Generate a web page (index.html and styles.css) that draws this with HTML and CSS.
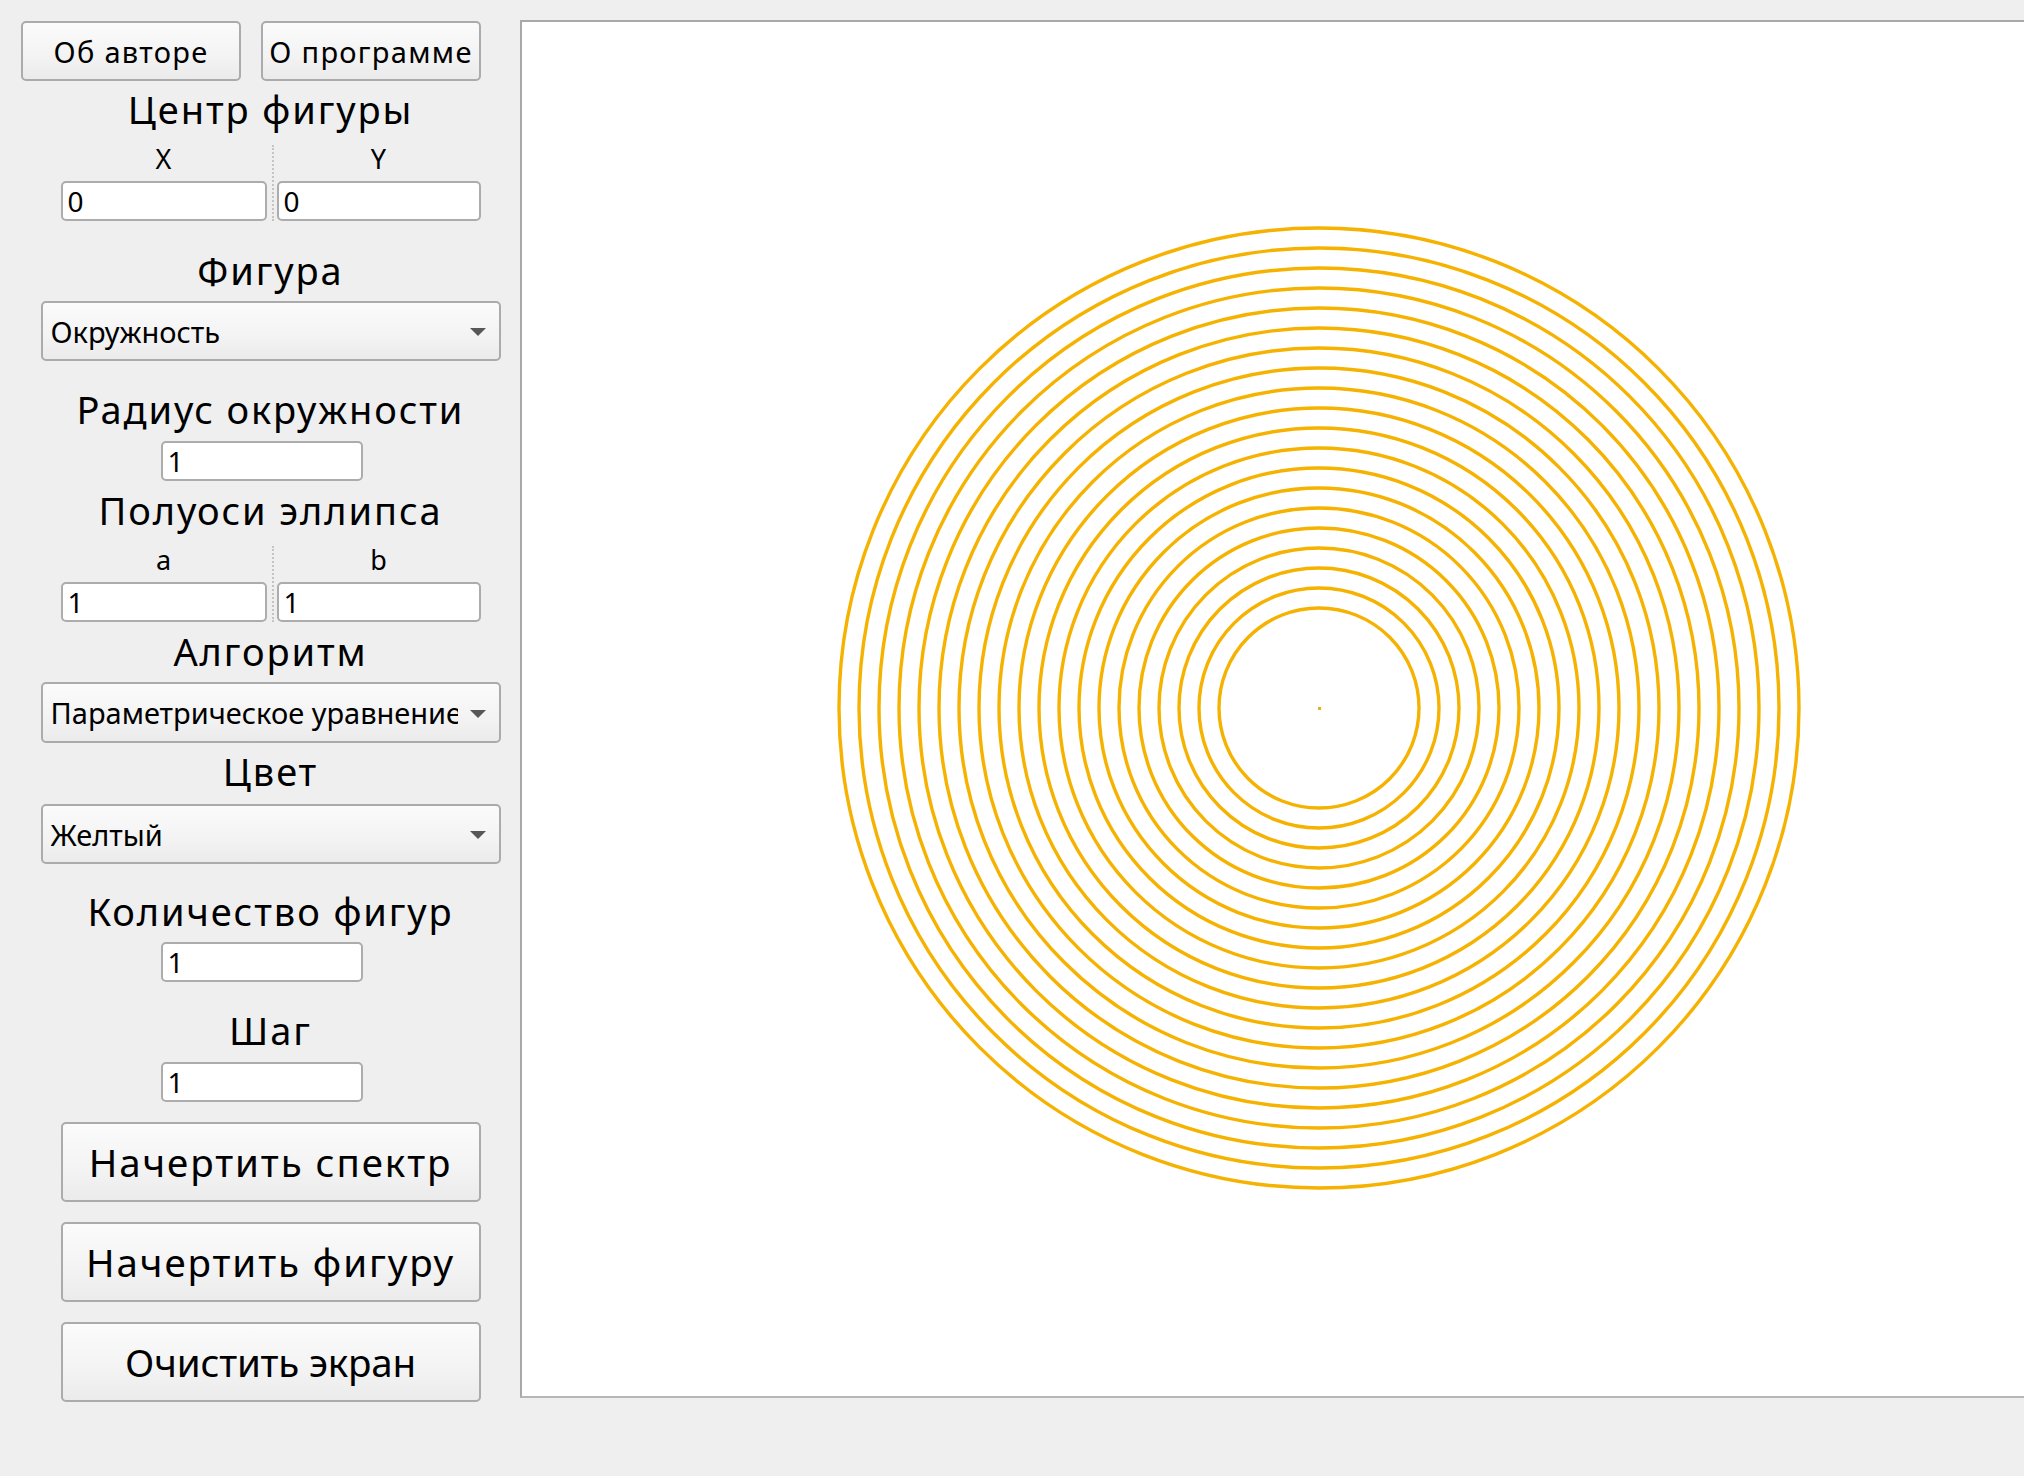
FILE: index.html
```html
<!DOCTYPE html>
<html lang="ru">
<head>
<meta charset="utf-8">
<title>Спектр фигур</title>
<link rel="stylesheet" href="styles.css">
</head>
<body>
<div class="app">
  <aside class="sidebar">
    <div class="top-row">
      <button class="btn btn-small">Об авторе</button>
      <button class="btn btn-small">О программе</button>
    </div>

    <div class="title t-center">Центр фигуры</div>
    <div class="pair pair-center">
      <div class="pair-col">
        <div class="sublabel">X</div>
        <div class="field">0</div>
      </div>
      <div class="splitter"></div>
      <div class="pair-col">
        <div class="sublabel">Y</div>
        <div class="field">0</div>
      </div>
    </div>

    <div class="title t-figure">Фигура</div>
    <div class="combo combo-figure"><span class="combo-text">Окружность</span><span class="arrow"></span></div>

    <div class="title t-radius">Радиус окружности</div>
    <div class="field field-single f-radius">1</div>

    <div class="title t-axes">Полуоси эллипса</div>
    <div class="pair pair-axes">
      <div class="pair-col">
        <div class="sublabel">a</div>
        <div class="field">1</div>
      </div>
      <div class="splitter"></div>
      <div class="pair-col">
        <div class="sublabel">b</div>
        <div class="field">1</div>
      </div>
    </div>

    <div class="title t-algo">Алгоритм</div>
    <div class="combo combo-algo"><span class="combo-text">Параметрическое уравнение</span><span class="arrow"></span></div>

    <div class="title t-color">Цвет</div>
    <div class="combo combo-color"><span class="combo-text">Желтый</span><span class="arrow"></span></div>

    <div class="title t-count">Количество фигур</div>
    <div class="field field-single f-count">1</div>

    <div class="title t-step">Шаг</div>
    <div class="field field-single f-step">1</div>

    <button class="btn btn-action a-first">Начертить спектр</button>
    <button class="btn btn-action">Начертить фигуру</button>
    <button class="btn btn-action a-clear">Очистить экран</button>
  </aside>

  <main class="canvas">
    <svg class="drawing" width="1600" height="1376" viewBox="0 0 1600 1376" xmlns="http://www.w3.org/2000/svg">
      <g fill="none" stroke="#f6b200" stroke-width="3.4">
        <circle cx="797" cy="686" r="100"/>
        <circle cx="797" cy="686" r="120"/>
        <circle cx="797" cy="686" r="140"/>
        <circle cx="797" cy="686" r="160"/>
        <circle cx="797" cy="686" r="180"/>
        <circle cx="797" cy="686" r="200"/>
        <circle cx="797" cy="686" r="220"/>
        <circle cx="797" cy="686" r="240"/>
        <circle cx="797" cy="686" r="260"/>
        <circle cx="797" cy="686" r="280"/>
        <circle cx="797" cy="686" r="300"/>
        <circle cx="797" cy="686" r="320"/>
        <circle cx="797" cy="686" r="340"/>
        <circle cx="797" cy="686" r="360"/>
        <circle cx="797" cy="686" r="380"/>
        <circle cx="797" cy="686" r="400"/>
        <circle cx="797" cy="686" r="420"/>
        <circle cx="797" cy="686" r="440"/>
        <circle cx="797" cy="686" r="460"/>
        <circle cx="797" cy="686" r="480"/>
      </g>
      <rect x="796" y="685" width="3" height="3" fill="#e3b21c"/>
    </svg>
  </main>
</div>
</body>
</html>
```

FILE: styles.css
```css
* { box-sizing: border-box; }

html, body {
  margin: 0;
  padding: 0;
  background: #efefef;
  width: 2024px;
  height: 1476px;
  overflow: hidden;
  font-family: "Noto Sans", "Open Sans", "DejaVu Sans", sans-serif;
  color: #000;
}

.app {
  display: flex;
  flex-direction: row;
  align-items: flex-start;
  height: 1476px;
}

.sidebar {
  width: 520px;
  flex: 0 0 520px;
  padding: 21px 0 0 21px;
  display: flex;
  flex-direction: column;
  align-items: center;
}

.sidebar > * { flex: 0 0 auto; }

/* buttons */
.btn {
  font-family: inherit;
  color: #000;
  background: linear-gradient(to bottom, #fbfbfb 0%, #f3f3f3 60%, #ebebeb 100%);
  border: 2px solid #ababab;
  border-radius: 5px;
  padding: 0;
  margin: 0;
  display: flex;
  align-items: center;
  justify-content: center;
  white-space: nowrap;
}

.top-row {
  align-self: flex-start;
  display: flex;
  gap: 20px;
}

.btn-small {
  width: 220px;
  height: 60px;
  font-size: 29px;
  letter-spacing: 0.045em;
}

.btn-action {
  width: 420px;
  height: 80px;
  font-size: 38.5px;
  letter-spacing: 0.05em;
  margin-top: 20px;
}

.btn-action.a-first { margin-top: 20px; }
.btn-action.a-clear { letter-spacing: -0.005em; }

/* titles */
.title {
  font-size: 38px;
  line-height: 40px;
  height: 40px;
  text-align: center;
  white-space: nowrap;
  letter-spacing: 0.05em;
}

.t-center { margin-top: 8px; }
.t-figure { margin-top: 29px; }
.t-radius { margin-top: 28px; }
.t-axes { margin-top: 9px; }
.t-algo { margin-top: 9px; }
.t-color { margin-top: 8px; }
.t-count { margin-top: 27px; }
.t-step { margin-top: 28px; }

/* pairs of fields */
.pair {
  display: grid;
  grid-template-columns: 206px 10px 204px;
  width: 420px;
}

.pair-center { margin-top: 16px; }
.pair-axes { margin-top: 16px; }

.pair-col {
  display: flex;
  flex-direction: column;
}

.sublabel {
  font-size: 27px;
  line-height: 28px;
  height: 28px;
  text-align: center;
  margin-bottom: 8px;
}

.splitter {
  justify-self: center;
  width: 0;
  height: 76px;
  border-left: 2px dotted #c4c4c4;
  margin-left: 2px;
}

/* text fields */
.field {
  height: 40px;
  background: #fff;
  border: 2px solid #acacac;
  border-radius: 5px;
  font-size: 28px;
  line-height: 36px;
  padding-left: 5px;
}

.field-single {
  width: 202px;
  margin-right: 18px;
}

.f-radius { margin-top: 12px; }
.f-count { margin-top: 11px; }
.f-step { margin-top: 12px; }

/* combo boxes */
.combo {
  width: 460px;
  height: 60px;
  border: 2px solid #ababab;
  border-radius: 5px;
  background: linear-gradient(to bottom, #fbfbfb 0%, #f3f3f3 60%, #ebebeb 100%);
  display: flex;
  align-items: center;
  padding-left: 8px;
  padding-right: 13px;
}

.combo-figure { margin-top: 11px; }
.combo-algo { margin-top: 11px; height: 61px; }
.combo-color { margin-top: 13px; }

.combo-text {
  flex: 1 1 auto;
  font-size: 29px;
  white-space: nowrap;
  overflow: hidden;
  max-width: 407px;
  margin-right: 12px;
}

.arrow {
  flex: 0 0 auto;
  width: 0;
  height: 0;
  border-left: 8px solid transparent;
  border-right: 8px solid transparent;
  border-top: 8px solid #575757;
  margin-top: 2px;
}

/* canvas */
.canvas {
  flex: 1 1 auto;
  margin-top: 20px;
  height: 1378px;
  background: #fff;
  border-top: 2px solid #a9a9a9;
  border-left: 2px solid #a9a9a9;
  border-bottom: 2px solid #b6b6b6;
  overflow: hidden;
  position: relative;
}

.drawing {
  display: block;
}
```
